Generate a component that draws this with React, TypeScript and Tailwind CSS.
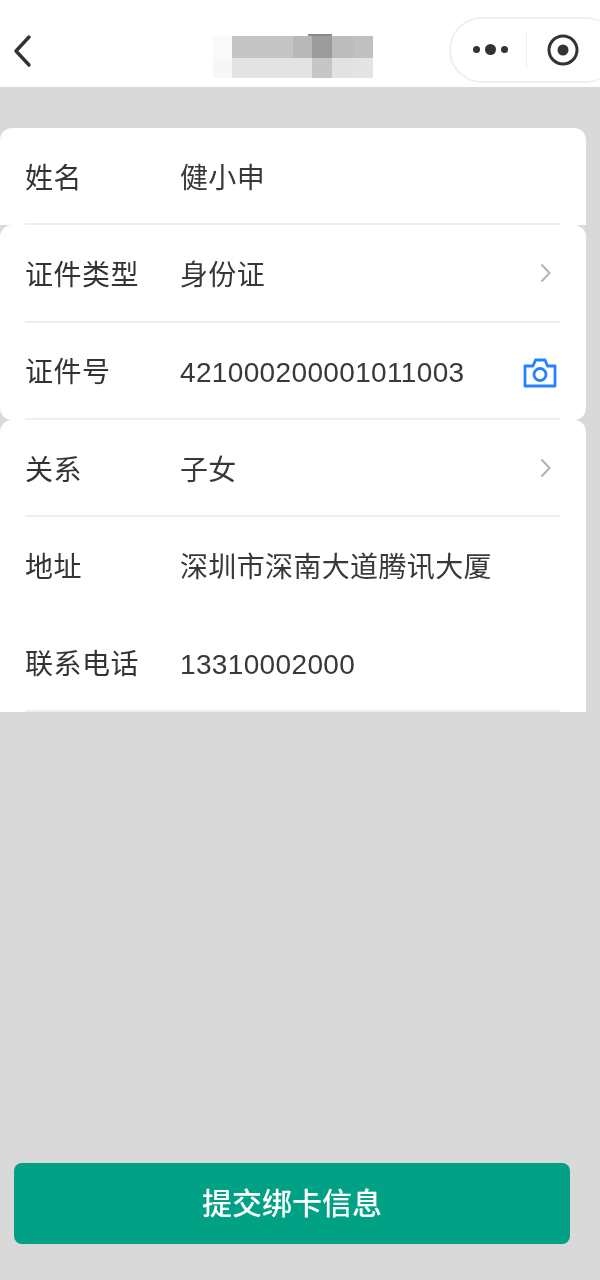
const font = "[font-family:'Liberation_Sans','Noto_Sans_CJK_SC',sans-serif]"

const Chevron = () => (
  <svg width="14" height="22" viewBox="0 0 14 22" fill="none" className="mr-[7px] -mt-[6px]">
    <path d="M2.5 2.5 L10.5 11 L2.5 19.5" stroke="#aab4c2" strokeWidth="2" />
  </svg>
)

const Camera = () => (
  <svg width="34" height="30" viewBox="0 0 34 30" fill="none" className="mr-[3px]">
    <path
      d="M2 8 H10 L12.5 2 H22 L24.5 8 H32 V28 H2 Z"
      stroke="#2681ff"
      strokeWidth="2.8"
      strokeLinejoin="round"
    />
    <circle cx="17" cy="16.5" r="6" stroke="#2681ff" strokeWidth="2.8" />
  </svg>
)

const Row = ({ label, value, right, line = true }: { label: string; value: string; right?: React.ReactNode; line?: boolean }) => (
  <div className="h-[97.3px] pl-[25px] pr-[26px]">
    <div className={`h-full flex items-center pt-[6px] border-b-2 ${line ? 'border-[#eeeeee]' : 'border-transparent'}`}>
      <span className="w-[155px] shrink-0 text-[28px] text-[#333333] tracking-[0.5px]">{label}</span>
      <span className="flex-1 text-[28px] text-[#383838] tracking-[0.35px]">{value}</span>
      {right}
    </div>
  </div>
)

const Mosaic = () => (
  <div className="flex h-[42px] relative">
    <div className="flex flex-col w-[19px]"><div className="h-[22px] bg-[#fafafa]" /><div className="h-[20px] bg-[#f7f7f7]" /></div>
    <div className="flex flex-col w-[61px]"><div className="h-[22px] bg-[#c4c4c4]" /><div className="h-[20px] bg-[#e3e3e3]" /></div>
    <div className="flex flex-col w-[19px]"><div className="h-[22px] bg-[#b8b8b8]" /><div className="h-[20px] bg-[#e3e3e3]" /></div>
    <div className="flex flex-col w-[20px]"><div className="h-[22px] bg-[#9c9c9c]" /><div className="h-[20px] bg-[#c6c6c6]" /></div>
    <div className="flex flex-col w-[21px]"><div className="h-[22px] bg-[#bcbcbc]" /><div className="h-[20px] bg-[#e2e2e2]" /></div>
    <div className="flex flex-col w-[20px]"><div className="h-[22px] bg-[#c0c0c0]" /><div className="h-[20px] bg-[#e4e4e4]" /></div>
    <div className="absolute left-[95px] -top-[2px] w-[24px] h-[2px] bg-[#8a8a8a]" />
  </div>
)

export default function App() {
  return (
    <div className={`w-[600px] h-[1280px] bg-[#d9d9d9] flex flex-col overflow-hidden blur-[0.4px] ${font}`}>
      <div className="h-[87px] shrink-0 bg-white flex items-center pt-[14px]">
        <svg width="20" height="34" viewBox="0 0 20 34" fill="none" className="ml-[12px] shrink-0">
          <path d="M17 3 L4 17 L17 31" stroke="#333333" strokeWidth="3.4" strokeLinecap="round" strokeLinejoin="round" />
        </svg>
        <div className="ml-[181px] mt-[13px] shrink-0"><Mosaic /></div>
        <div className="ml-[76px] -mt-[2px] w-[170px] h-[66px] shrink-0 rounded-full border-2 border-[#efefef] flex items-center">
          <div className="ml-[22px] flex items-center gap-[5px]">
            <span className="w-[7px] h-[7px] rounded-full bg-[#333333]" />
            <span className="w-[11px] h-[11px] rounded-full bg-[#333333]" />
            <span className="w-[7px] h-[7px] rounded-full bg-[#333333]" />
          </div>
          <div className="ml-[18px] w-[1px] h-[36px] bg-[#eeeeee]" />
          <svg width="32" height="32" viewBox="0 0 32 32" fill="none" className="ml-[20px]">
            <circle cx="16" cy="16" r="14" stroke="#333333" strokeWidth="3" />
            <circle cx="16" cy="16" r="5.5" fill="#333333" />
          </svg>
        </div>
      </div>

      <div className="mt-[41px] w-[586px]">
        <div className="bg-white rounded-t-[12px]">
          <Row label="姓名" value="健小申" />
        </div>
        <div className="bg-white rounded-[12px]">
          <Row label="证件类型" value="身份证" right={<Chevron />} />
          <Row label="证件号" value="421000200001011003" right={<Camera />} />
        </div>
        <div className="bg-white rounded-t-[12px]">
          <Row label="关系" value="子女" right={<Chevron />} />
          <Row label="地址" value="深圳市深南大道腾讯大厦" line={false} />
          <Row label="联系电话" value="13310002000" />
        </div>
      </div>

      <button className="mt-auto mb-[36px] ml-[14px] w-[556px] h-[81px] shrink-0 rounded-[8px] bg-[#00a184] text-white text-[30px] font-medium">
        提交绑卡信息
      </button>
    </div>
  )
}
